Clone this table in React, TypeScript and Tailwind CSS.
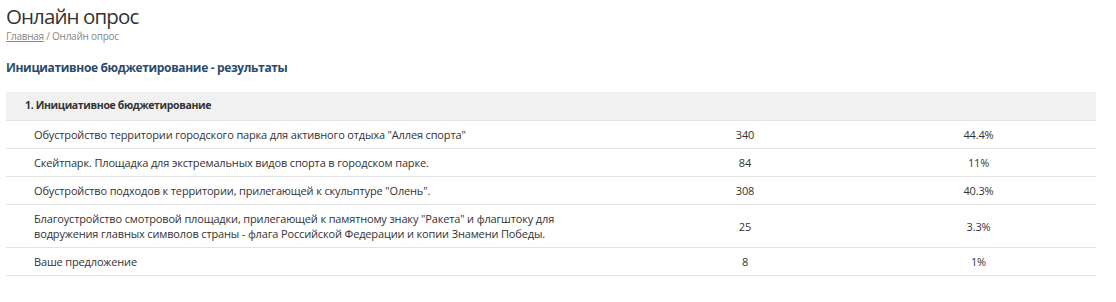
export default function App() {
  const rows = [
    { t: 'Обустройство территории городского парка для активного отдыха "Аллея спорта"', n: '340', p: '44.4%' },
    { t: 'Скейтпарк. Площадка для экстремальных видов спорта в городском парке.', n: '84', p: '11%' },
    { t: 'Обустройство подходов к территории, прилегающей к скульптуре "Олень".', n: '308', p: '40.3%' },
    { t: 'Благоустройство смотровой площадки, прилегающей к памятному знаку "Ракета" и флагштоку для водружения главных символов страны - флага Российской Федерации и копии Знамени Победы.', n: '25', p: '3.3%' },
    { t: 'Ваше предложение', n: '8', p: '1%' },
  ];
  return (
    <div className="bg-white w-[1116px] h-[302px] pl-[6px] text-[#333]" style={{ fontFamily: '"Open Sans", "Noto Sans", sans-serif' }}>
      <h1 className="text-[20.5px] leading-[26px] pt-[3px] text-[#333] font-normal tracking-[-0.9px]">Онлайн опрос</h1>
      <div className="text-[10px] leading-[14px] mt-0 text-[#888] tracking-[-0.25px]">
        <span className="underline">Главная</span> / Онлайн опрос
      </div>
      <h2 className="text-[12px] leading-[16px] mt-[17px] font-bold text-[#2c4a6a] tracking-[-0.35px]">Инициативное бюджетирование - результаты</h2>
      <div className="w-[1090px] mt-[16px]">
        <div className="bg-[#f1f1f1] h-[29px] flex items-center pl-[19px] text-[10.5px] font-bold text-[#333] border-b border-[#e2e2e2] tracking-[-0.35px]">
          1. Инициативное бюджетирование
        </div>
        {rows.map((r, i) => (
          <div key={i} className="flex items-center border-b border-[#e2e2e2] text-[11px] leading-[15px] text-[#333] min-h-[28px] py-[6px] tracking-[-0.15px]">
            <div className="w-[623px] pl-[28px] pr-[60px]">{r.t}</div>
            <div className="w-[232px] text-center">{r.n}</div>
            <div className="w-[235px] text-center">{r.p}</div>
          </div>
        ))}
      </div>
    </div>
  );
}
